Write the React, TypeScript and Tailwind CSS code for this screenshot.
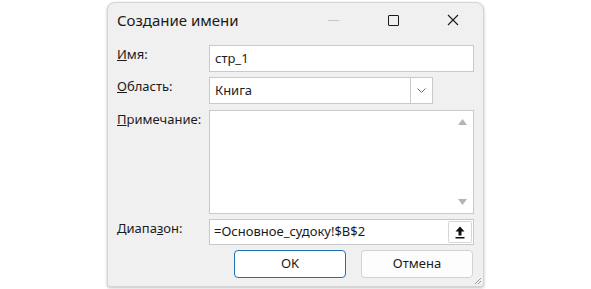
import React from "react";

const font = { fontFamily: '"Noto Sans", "Open Sans", Arial, sans-serif' };

function Label({ children }: { children: React.ReactNode }) {
  return <p className="text-[13px] leading-[18px] text-[#1b1b1b]">{children}</p>;
}

export default function App() {
  return (
    <div className="w-[591px] h-[289px] bg-white overflow-hidden" style={font}>
      <div className="relative ml-[107px] mt-[2px] w-[377px] h-[285px] flex flex-col rounded-t-[8px] rounded-b-[3px] border border-[#d4d4d4] bg-[#f0f0f0] shadow-[0_1px_3px_rgba(0,0,0,0.25)]">
        {/* title bar */}
        <div className="flex h-[34px] items-center">
          <h1 className="ml-[9px] mr-auto text-[15px] leading-[20px] text-[#1b1b1b]">Создание имени</h1>
          <div className="flex h-full items-center">
            <div className="flex w-[60px] justify-center">
              <div className="h-[1px] w-[11px] bg-[#c6c6c6]" />
            </div>
            <div className="flex w-[60px] justify-center">
              <div className="h-[11px] w-[11px] rounded-[1px] border border-[#1b1b1b]" />
            </div>
            <div className="flex w-[60px] justify-center">
              <svg width="12" height="12" viewBox="0 0 12 12">
                <path d="M1 1 L11 11 M11 1 L1 11" stroke="#1b1b1b" strokeWidth="1.1" />
              </svg>
            </div>
          </div>
        </div>

        {/* fields */}
        <div className="mt-[8px] grid grid-cols-[92px_1fr] items-start px-[9px]">
          <Label>
            <u>И</u>мя:
          </Label>
          <div className="flex h-[27px] items-center border border-[#c9c9c9] bg-white px-[5px] text-[13px] text-[#1b1b1b]">
            стр_1
          </div>

          <div className="col-span-2 h-[5px]" />
          <Label>
            <u>О</u>бласть:
          </Label>
          <div className="mr-[41px] flex h-[27px] items-stretch border border-[#c9c9c9] bg-white pl-[5px] text-[13px] text-[#1b1b1b]">
            <span className="mr-auto self-center">Книга</span>
            <div className="flex w-[22px] items-center justify-center border-l border-[#c9c9c9]">
              <svg width="9" height="5" viewBox="0 0 9 5">
                <path d="M0.5 0.5 L4.5 4.5 L8.5 0.5" fill="none" stroke="#6a6a6a" strokeWidth="1" />
              </svg>
            </div>
          </div>

          <div className="col-span-2 h-[6px]" />
          <Label>
            <u>П</u>римечание:
          </Label>
          <div className="flex h-[104px] border border-[#c9c9c9] bg-white">
            <div className="flex-1" />
            <div className="flex w-[22px] flex-col items-center justify-between py-[8px]">
              <svg width="9" height="6" viewBox="0 0 9 6">
                <path d="M4.5 0 L9 6 L0 6 Z" fill="#b4b4b4" />
              </svg>
              <svg width="9" height="6" viewBox="0 0 9 6">
                <path d="M0 0 L9 0 L4.5 6 Z" fill="#b4b4b4" />
              </svg>
            </div>
          </div>

          <div className="col-span-2 h-[5px]" />
          <Label>
            Диапа<u>з</u>он:
          </Label>
          <div className="flex h-[26px] items-stretch border border-[#c9c9c9] bg-white pl-[4px] text-[13px] text-[#1b1b1b]">
            <span className="mr-auto self-center">=Основное_судоку!$B$2</span>
            <div className="m-[1px] flex w-[24px] items-center justify-center rounded-[2px] border border-[#d6d6d6] bg-white">
              <svg width="10" height="13" viewBox="0 0 10 13">
                <path d="M5 0.5 L9.5 5.5 L6.5 5.5 L6.5 9.5 L3.5 9.5 L3.5 5.5 L0.5 5.5 Z" fill="#111" />
                <rect x="0.5" y="11" width="9" height="1.5" fill="#111" />
              </svg>
            </div>
          </div>
        </div>

        {/* buttons */}
        <div className="mt-[5px] flex justify-end gap-[15px] pr-[10px]">
          <button className="h-[28px] w-[112px] rounded-[4px] border border-[#1f6fb5] bg-white text-[13px] text-[#1b1b1b]">
            OK
          </button>
          <button className="h-[28px] w-[112px] rounded-[4px] border border-[#d2d2d2] bg-[#fdfdfd] text-[13px] text-[#1b1b1b]">
            Отмена
          </button>
        </div>

        <svg className="absolute bottom-[1px] right-[1px]" width="9" height="9" viewBox="0 0 9 9">
          <path d="M8 2 L2 8 M8 5 L5 8" stroke="#9a9a9a" strokeWidth="1" />
        </svg>
      </div>
    </div>
  );
}
